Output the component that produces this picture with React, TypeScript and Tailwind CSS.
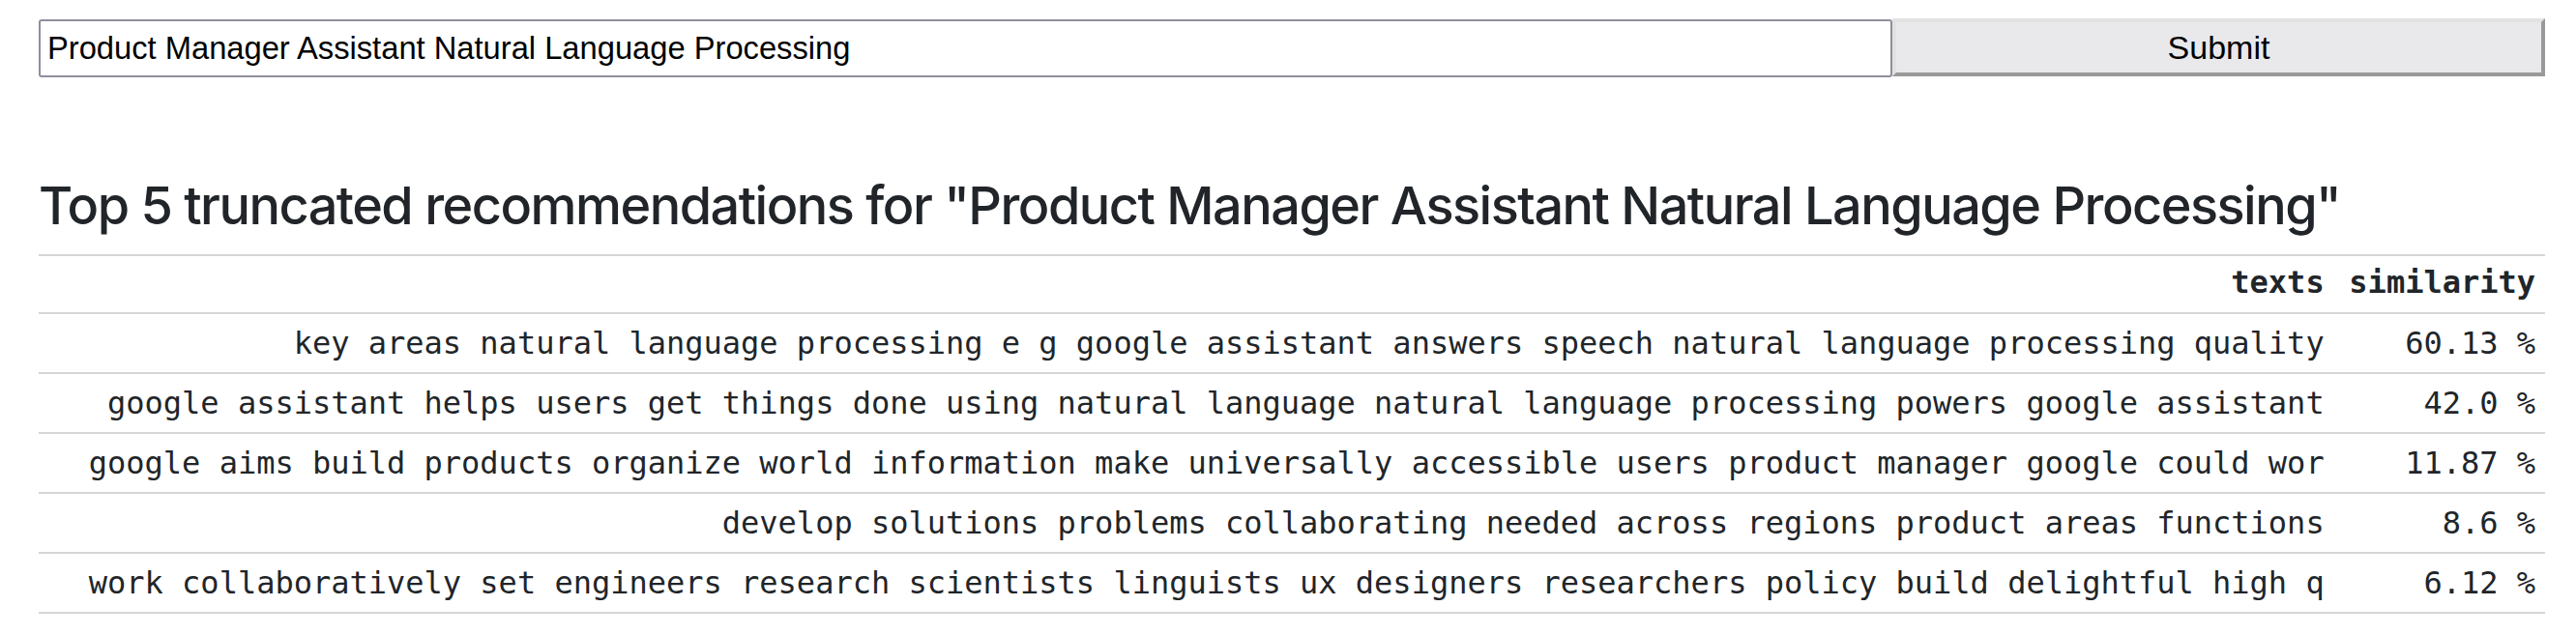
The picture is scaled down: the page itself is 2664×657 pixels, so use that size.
const rows = [
  {
    text: 'key areas natural language processing e g google assistant answers speech natural language processing quality',
    sim: '60.13 %',
  },
  {
    text: 'google assistant helps users get things done using natural language natural language processing powers google assistant',
    sim: '42.0 %',
  },
  {
    text: 'google aims build products organize world information make universally accessible users product manager google could wor',
    sim: '11.87 %',
  },
  {
    text: 'develop solutions problems collaborating needed across regions product areas functions',
    sim: '8.6 %',
  },
  {
    text: 'work collaboratively set engineers research scientists linguists ux designers researchers policy build delightful high q',
    sim: '6.12 %',
  },
]

const query = 'Product Manager Assistant Natural Language Processing'

export default function App() {
  return (
    <div className="w-[2664px] h-[657px] bg-white pl-[40px] pr-[32px] pt-[19px]">
      <form className="flex" onSubmit={(e) => e.preventDefault()}>
        <input
          defaultValue={query}
          className="flex-1 h-[60px] mt-[1px] border-2 border-[#8f8e9b] rounded-[3px] px-[7px] text-[32.7px] text-black outline-none"
          style={{ fontFamily: '"Liberation Sans", Arial, sans-serif' }}
        />
        <button
          type="submit"
          className="w-[675px] h-[60px] border-4 border-t-[#e2e2e2] border-l-[#e2e2e2] border-b-[#999999] border-r-[#999999] bg-[#e9e9eb] text-[34px] text-black"
          style={{ fontFamily: '"Liberation Sans", Arial, sans-serif' }}
        >
          Submit
        </button>
      </form>

      <h2
        className="mt-[101px] text-[54px] leading-[1.2] font-medium tracking-[-1.5px] whitespace-nowrap text-[#212529]"
        style={{ fontFamily: 'Inter, "Liberation Sans", sans-serif' }}
      >
        Top 5 truncated recommendations for "{query}"
      </h2>

      <table
        className="mt-[17px] w-full border-collapse text-[32px] leading-[48px] text-[#212529]"
        style={{ fontFamily: '"DejaVu Sans Mono", "Liberation Mono", monospace' }}
      >
        <thead>
          <tr className="border-t-2 border-[#d6d6d6]">
            <th className="text-right font-bold pl-[12px] pr-[8px] pt-[3px] pb-[7px]">texts</th>
            <th className="text-right font-bold pl-[14px] pr-[10px] pt-[3px] pb-[7px]">similarity</th>
          </tr>
        </thead>
        <tbody>
          {rows.map((r) => (
            <tr key={r.sim} className="border-t-2 border-b-2 border-[#d6d6d6]">
              <td className="text-right pl-[12px] pr-[8px] py-[6px] whitespace-nowrap">{r.text}</td>
              <td className="text-right pl-[14px] pr-[10px] py-[6px] whitespace-nowrap">{r.sim}</td>
            </tr>
          ))}
        </tbody>
      </table>
    </div>
  )
}
